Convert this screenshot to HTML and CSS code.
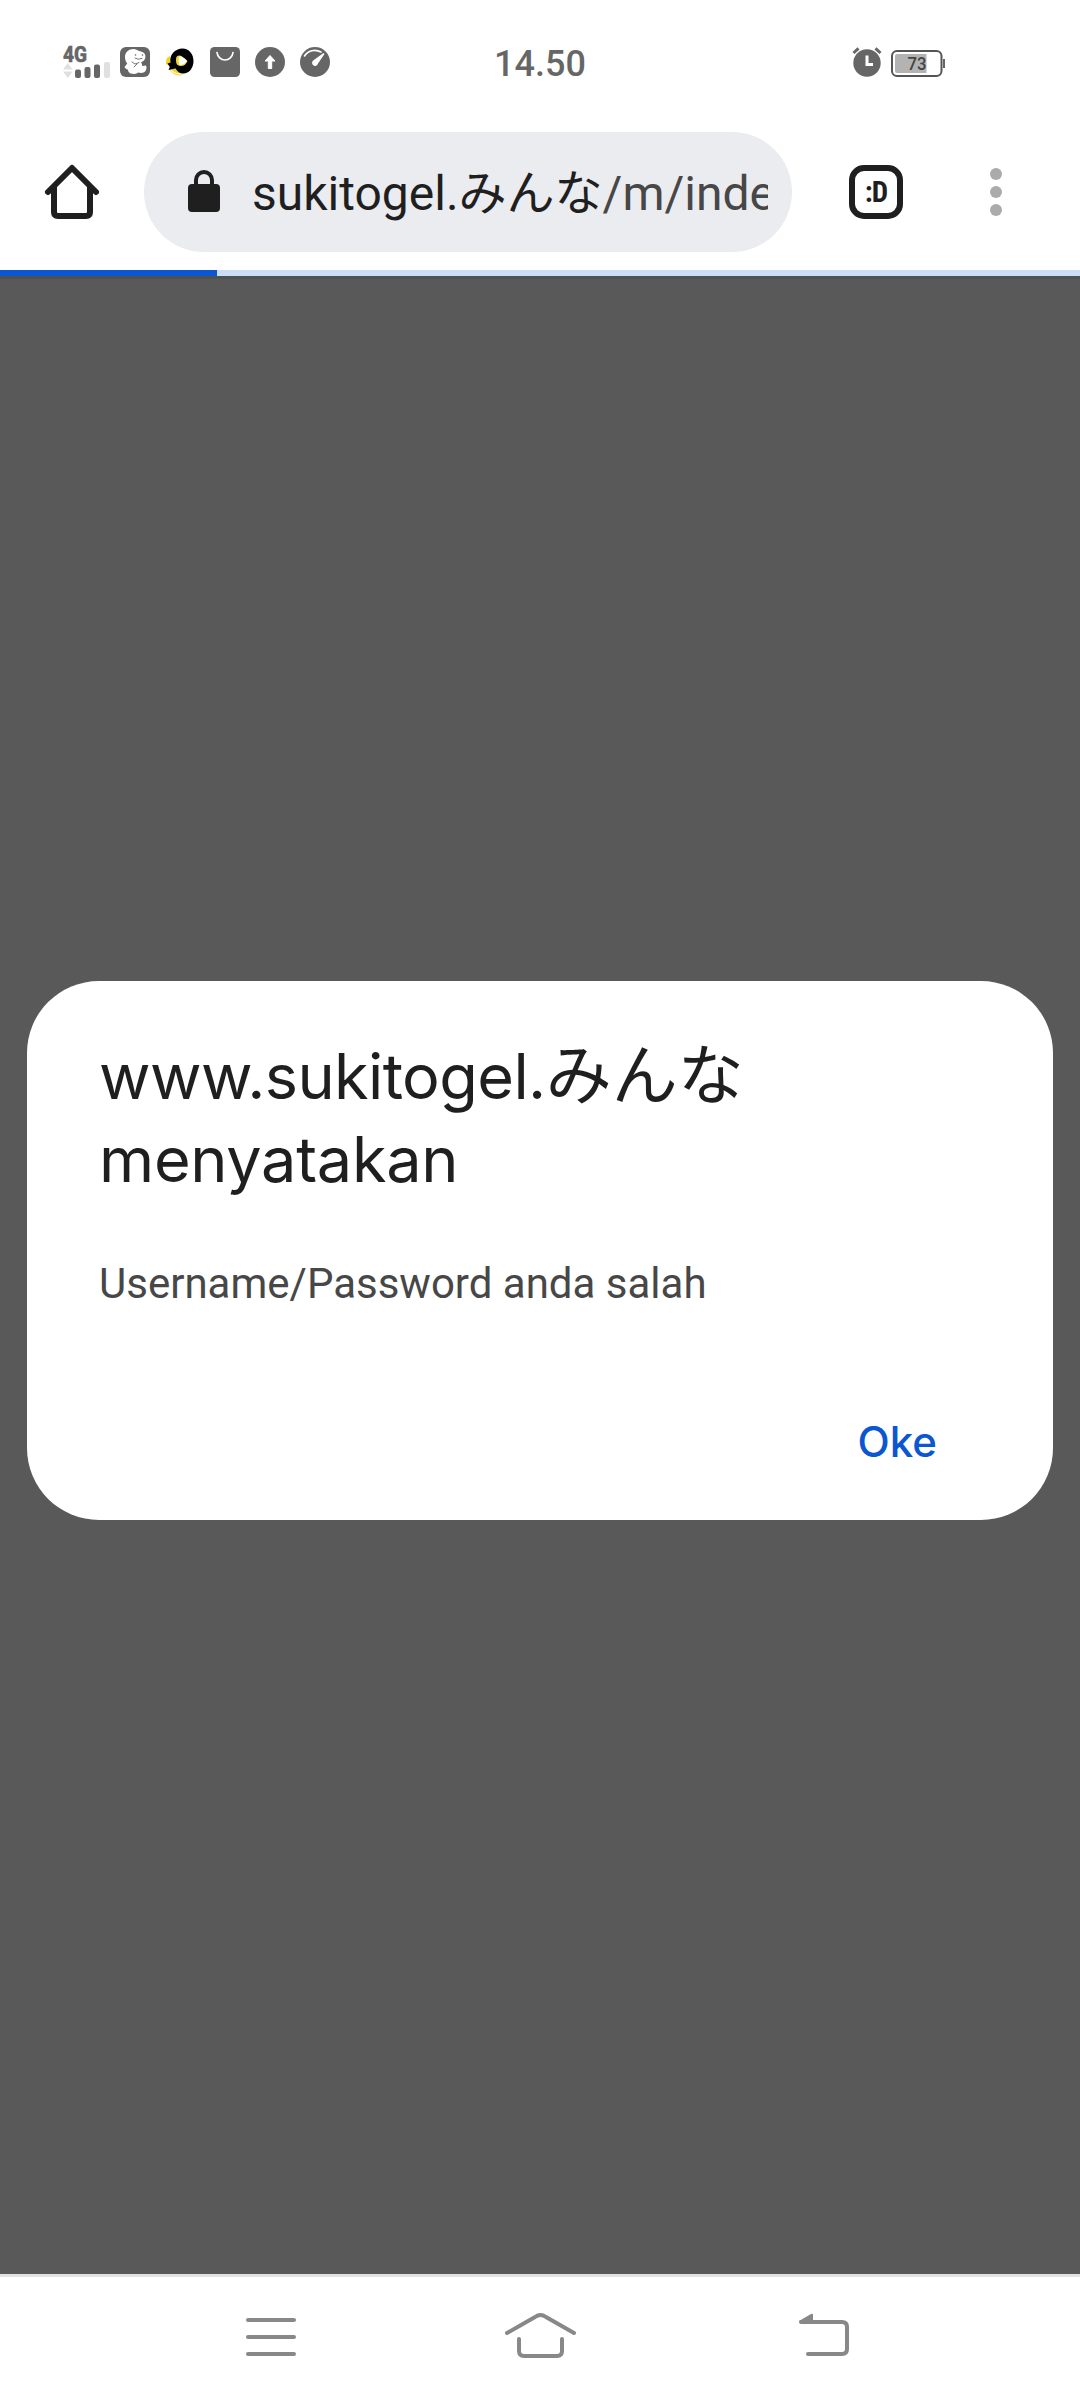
FILE: index.html
```html
<!DOCTYPE html>
<html lang="id">
<head>
<meta charset="utf-8">
<title>www.sukitogel.みんな</title>
<link rel="stylesheet" href="styles.css">
</head>
<body>
<div class="screen">
  <header class="status">
    <div class="status-left">
      <svg class="signal" width="48" height="32" viewBox="0 0 48 32">
        <text class="signal-text" x="0" y="15" textLength="24" lengthAdjust="spacingAndGlyphs">4G</text>
        <path fill="#e0e0e0" d="M0 22.500l4.800-6.500 4.800 6.500zM0 24.500h9.600l-4.800 6.500z"/>
        <g fill="#666"><rect x="12" y="22.500" width="6" height="8.500" rx="2"/><rect x="21.500" y="20" width="6" height="11" rx="2"/><rect x="31" y="17.500" width="6" height="13.500" rx="2"/></g>
        <rect x="41" y="15" width="6" height="16" rx="2" fill="#e0e0e0"/>
      </svg>
      <svg width="30" height="30" viewBox="0 0 30 30">
        <rect width="30" height="30" rx="6" fill="#666"/>
        <path fill="#fff" d="M5 10C5 5 9 1.800 14 2c3 .2 4 2 7 2.500 3.500.8 5 3.500 4.300 6.500-.7 2.700-3 3.500-4.300 4.500 1 1 1 2 1.200 3.500l3.800-.5c1.500 3-.5 7-3.500 7.300-2 .4-3.500-.3-4.500-.3-1 1-3 1.800-5 1.200-2 .5-5-1-5-4-1.600-.5-2.700-1.200-3.500-2.700l2.800-3.500C5.800 15 5 12.500 5 10z"/>
        <path fill="none" stroke="#666" stroke-width=".9" stroke-linecap="round" d="M15 11.200q3 2 7 .3M12 15l3 2 4-1.500M14 20l3-3"/>
        <circle cx="15.500" cy="8" r=".8" fill="#666"/><circle cx="22.500" cy="8" r=".8" fill="#666"/>
      </svg>
      <svg width="30" height="30" viewBox="0 0 30 30">
        <path fill="#efd42c" d="M5 9C2 10 .5 13 1 17l4 2zM4 22c3 5 8 7.500 14 6l1-6z"/>
        <path fill="none" stroke="#fff" stroke-width="1.200" d="M5 22c3 4 7 5.500 13 5"/>
        <path d="M17.500 1.500C24 1.500 28.500 7 28.500 14c0 7-4.500 12.500-10 12.500-4 0-6-2-8-5L3.500 23l1.300-3-2.300-3.500 3-1C4 8 10 1.500 17.500 1.500z"/>
        <path fill="#efd42c" d="M11 12c0-4 3.500-4 5.500-3l6 5c-1.500 4-5 6-9 4.500C11 17.500 11 15 11 12z"/>
        <path fill="#fff" d="M14 9.500q4-.5 8 4.500-2 3.500-7.500 4.500-1.500-4-.5-9z"/>
      </svg>
      <svg width="30" height="30" viewBox="0 0 30 30">
        <rect width="30" height="30" rx="4.500" fill="#666"/>
        <path d="M7 5.500c.5 4.500 4 7.500 8 7.500s7.500-3 8-7.500" fill="none" stroke="#fff" stroke-width="1.700" stroke-linecap="round"/>
      </svg>
      <svg width="30" height="30" viewBox="0 0 30 30">
        <circle cx="15" cy="15" r="15" fill="#666"/>
        <path fill="#fff" stroke="#fff" stroke-width="1" stroke-linejoin="round" d="M15 8.500l5 5.500h-3.300v7.500h-3.400V14H10z"/>
      </svg>
      <svg width="30" height="30" viewBox="0 0 30 30">
        <circle cx="15" cy="15" r="15" fill="#666"/>
        <path fill="none" stroke="#fff" stroke-width="1.600" stroke-linecap="round" d="M4.500 9C8 3.500 15 1.800 21 5"/>
        <path fill="#fff" d="M23.500 6l1 1-6.500 9.500a3 3 0 1 1-4.500-3.200z"/>
      </svg>
    </div>
    <div class="clock">14.50</div>
    <div class="status-right">
      <svg width="30" height="30" viewBox="0 0 30 30">
        <circle cx="15" cy="16" r="13.700" fill="#666"/>
        <path d="M1.500 6l5-4.700M28.500 6l-5-4.700" stroke="#666" stroke-width="3"/>
        <path d="M15 8.500v9h6" fill="none" stroke="#fff" stroke-width="3"/>
      </svg>
      <svg width="55" height="28" viewBox="0 0 55 28">
        <rect x="1" y="1" width="49.500" height="25" rx="5" fill="#fff" stroke="#555" stroke-width="2"/>
        <path fill="#b3b3b3" d="M6 4h29.500v19H6a2 2 0 0 1-2-2V6a2 2 0 0 1 2-2z"/>
        <path stroke="#555" stroke-width="1.800" d="M53 9v9"/>
        <text class="battery-text" x="16.500" y="20" textLength="19" lengthAdjust="spacingAndGlyphs">73</text>
      </svg>
    </div>
  </header>

  <nav class="toolbar">
    <svg class="home" width="54" height="54" viewBox="0 0 54 54">
      <path d="M3 27L27 3l24 24M9 22v25q0 4 4 4h28q4 0 4-4V22" fill="none" stroke="#1f1f1f" stroke-width="6" stroke-linecap="round" stroke-linejoin="round"/>
    </svg>
    <div class="omnibox">
      <svg class="lock" width="32" height="42" viewBox="0 0 32 42">
        <rect y="14" width="32" height="28" rx="4" fill="#1f1f1f"/>
        <path d="M8 16V10a8 8 0 0 1 16 0v6" fill="none" stroke="#1f1f1f" stroke-width="4"/>
      </svg>
      <div class="url">sukitogel.みんな<span class="path">/m/inde</span></div>
    </div>
    <div class="tabs">:D</div>
    <svg class="more" width="12" height="48" viewBox="0 0 12 48" fill="#ababab"><circle cx="6" cy="6" r="6"/><circle cx="6" cy="24" r="6"/><circle cx="6" cy="42" r="6"/></svg>
  </nav>
  <div class="progress"><div class="progress-fill"></div></div>

  <main class="page">
    <section class="dialog">
      <h1 class="title">www.sukitogel.<span class="title-jp">みんな</span><br><span class="says">menyatakan</span></h1>
      <p class="message">Username/Password anda salah</p>
      <div class="actions"><button class="ok">Oke</button></div>
    </section>
  </main>

  <footer class="navbar">
    <svg width="50" height="44" viewBox="0 0 50 44"><path d="M2 7h46M2 24h46M2 41h46" stroke="#888" stroke-width="4" stroke-linecap="round"/></svg>
    <svg class="nav-home" width="71" height="44" viewBox="0 0 71 44"><path d="M2 20L30 4q5.500-4 11 0l28 16M14 26v12q0 5 5 5h33q5 0 5-5V26" fill="none" stroke="#888" stroke-width="4" stroke-linecap="round"/></svg>
    <svg width="51" height="44" viewBox="0 0 51 44"><path d="M3 9h41q5 0 5 5v22q0 5-5 5H10" fill="none" stroke="#888" stroke-width="4" stroke-linecap="round"/><path d="M1 8L13 1q2-1 2 1v8H3z" fill="#888"/></svg>
  </footer>
</div>
</body>
</html>
```
FILE: styles.css
```css
* { box-sizing: border-box; }
body { margin: 0; background: #fff; font-family: Roboto, "Noto Sans CJK JP", sans-serif; }
svg { display: block; flex: none; overflow: visible; }
.screen { width: 1080px; height: 2400px; display: flex; flex-direction: column; overflow: hidden; }

.status { height: 132px; padding: 47px 134px 0 63px; display: grid; grid-template-columns: 431px 1fr auto; align-items: start; }
.status-left { display: flex; gap: 15px; }
.signal { margin-right: -6px; }
.signal-text { font: 800 21.500px Roboto, sans-serif; fill: #666; stroke: #666; stroke-width: .5px; }
.clock { padding-top: 1px; font-size: 36px; font-weight: 500; line-height: 32px; color: #666; }
.status-right { display: flex; gap: 9px; }
.status-right svg:last-child { margin-top: 3px; }
.battery-text { font: 500 18px Roboto, sans-serif; fill: #444; }

.toolbar { height: 138px; padding: 0 78px 18px 45px; display: flex; align-items: center; }
.omnibox { width: 648px; height: 120px; margin-left: 45px; padding: 0 24px 0 44px; border-radius: 60px; background: #ebecf0; display: flex; align-items: center; }
.lock { margin-top: -2px; }
.url { flex: 1; margin-left: 32px; padding-top: 3px; overflow: hidden; white-space: nowrap; font-size: 48px; line-height: 72px; color: #1f1f1f; }
.path { color: #474747; }
.tabs { width: 54px; height: 54px; margin-left: 57px; border: 6px solid #1f1f1f; border-radius: 15px; display: flex; align-items: center; justify-content: center; font: 700 29px/42px "Roboto Condensed", Roboto, sans-serif; color: #1f1f1f; letter-spacing: -1px; }
.more { margin-left: 87px; }

.progress { height: 9px; background: #ccdcf6; border-bottom: 3px solid #4f5051; }
.progress-fill { width: 217px; height: 6px; background: #0b57d0; }

.page { flex: 1; background: #595959; padding: 702px 27px 0; }
.dialog { height: 539px; padding: 54px 72px 0; border-radius: 72px; background: #fff; }
.title { height: 166px; margin: 0; font: 400 63px/83px Inter, "Noto Sans CJK JP", sans-serif; color: #1f1f1f; letter-spacing: -.6px; white-space: nowrap; }
.title-jp { font-size: 66px; line-height: 1; letter-spacing: 0; }
.says { letter-spacing: -.3px; }
.message { margin: 53px 0 0; font-size: 42px; line-height: 60px; color: #474747; white-space: nowrap; }
.actions { display: flex; justify-content: flex-end; margin-top: 98px; padding-right: 44px; }
.ok { border: 0; padding: 0; background: none; color: #0b57d0; font: 500 42px/60px Inter, sans-serif; }

.navbar { height: 126px; border-top: 3px solid #e2e2e2; padding: 36px 231px 0 246px; display: flex; justify-content: space-between; background: #fff; }
.nav-home { margin-right: 13px; }
```
